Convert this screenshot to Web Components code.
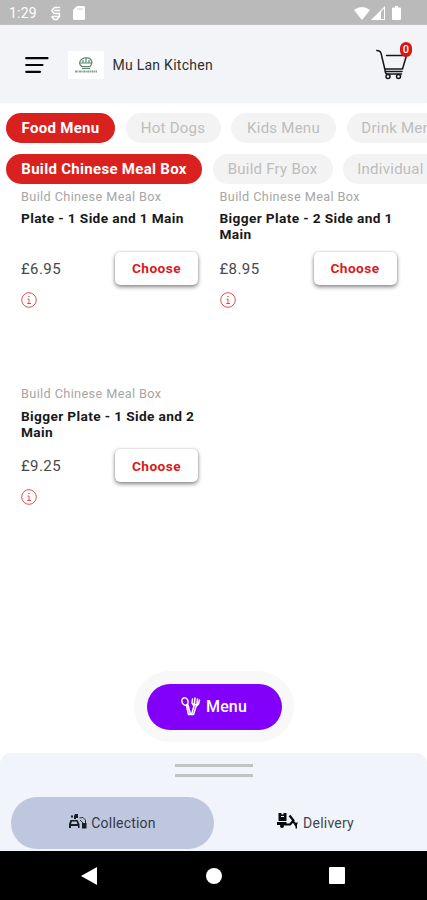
<!DOCTYPE html>
<html lang="en">
<head>
<meta charset="utf-8">
<title>Mu Lan Kitchen</title>
<style>
html,body{margin:0;padding:0;height:900px;overflow:hidden;background:#fff}
body{font-family:Roboto,"Liberation Sans",sans-serif;color:#333}
</style>
</head>
<body>
<order-app></order-app>
<script>
function define(name, markup) {
  const template = document.createElement('template');
  template.innerHTML = markup;
  customElements.define(name, class extends HTMLElement {
    constructor() {
      super();
      this.attachShadow({mode: 'open'}).appendChild(template.content.cloneNode(true));
    }
  });
}

define('status-bar', `
<style>
:host{display:flex;align-items:center;height:25px;background:#bababa;color:#fff;font-size:14px;padding:1px 26px 0 9px;box-sizing:border-box}
span{width:41px;letter-spacing:.2px}
svg{display:block}
.gap{flex:1}
</style>
<span>1:29</span>
<svg width="12" height="15" viewBox="0 0 12 15" fill="none" stroke="#fff" stroke-width="1.400"><path d="M10 1.500H4.500L1.700 4.500 4 7.500H9.500V10.500L7 13.500H4L1.500 10.500M4 4.500H10M1.800 10.500H9"/></svg>
<svg style="margin-left:11px" width="12" height="14" viewBox="0 0 12 14"><path fill="#fff" d="M4 0h6.500Q12 0 12 1.500v11q0 1.500-1.500 1.500h-9Q0 14 0 12.500V4z"/><path stroke="#bababa" stroke-width=".7" d="M5 2v2M7 2v2M9 2v2"/></svg>
<div class="gap"></div>
<svg width="16" height="13" viewBox="0 0 16 13"><path fill="#fff" d="M0 3Q8-3 16 3L8 13z"/></svg>
<svg style="margin-left:1px" width="14" height="14" viewBox="0 0 14 14"><path fill="#fff" d="M0 14 14 0v14z"/><path fill="#bababa" d="M10 5.500 13 2.500V13H10z"/></svg>
<svg style="margin-left:7px" width="9" height="14" viewBox="0 0 9 14"><path fill="#fff" d="M3 0h3v1.500h2Q9 1.500 9 2.500V13q0 1-1 1H1q-1 0-1-1V2.500q0-1 1-1h2z"/></svg>`);

define('cart-button', `
<style>
:host{display:block;position:relative;width:40px;height:40px}
svg{display:block}
b{position:absolute;left:24px;top:-3px;width:12px;height:15px;border-radius:6px;background:#dc1313;color:#fff;font-size:11px;line-height:15px;text-align:center;font-weight:500}
</style>
<svg width="40" height="40" viewBox="0 0 40 40" fill="none" stroke="#16161a" stroke-width="1.500" stroke-linecap="round" stroke-linejoin="round"><path d="M.800 5.500Q4 5.500 5 8L9 25Q9 29 11.500 29H25.500M10.500 10.500H30.500L26.500 24H9M9.500 26.500H26" /><circle cx="12" cy="31.500" r="2"/><circle cx="22.500" cy="31.500" r="2"/></svg>
<b><slot></slot></b>`);

define('app-header', `
<style>
:host{display:flex;align-items:center;height:78px;box-sizing:border-box;background:#f2f4f7;padding:0 14px 0 25px;box-shadow:0 1px 2px #f8f9fb}
.logo{width:36px;height:28px;background:#fff;margin:2px 8.500px 0 19px;display:grid;place-items:center}
.name{font-size:14px;letter-spacing:.26px;color:#303030;flex:1;padding-top:2px}
cart-button{margin-top:1px;margin-right:-3px}
svg{display:block}
</style>
<svg style="margin-top:2px" width="24" height="18" viewBox="0 0 24 18" stroke="#050505" stroke-width="2.200" stroke-linecap="round"><path d="M1.200 2.200H22.500M1.200 9H17.500M1.200 15.800H15"/></svg>
<div class="logo"><svg width="24" height="18" viewBox="0 0 24 18" fill="none" stroke="#5e8673"><path stroke-width="1.200" d="M7.500 10.500C3 6 8 1.500 12 2c5-.5 8 4 4 8.500H7.500ZM6 7h12M12 2v5M9 4v3M15 4v3M8 12.300h8"/><path stroke="#7c9f90" stroke-width="2" stroke-dasharray="2 .5 1 .6" d="M1 15.500H23"/></svg></div>
<div class="name"><slot></slot></div>
<cart-button>0</cart-button>`);

define('menu-chip', `
<style>
:host{display:flex;align-items:center;justify-content:center;flex:none;box-sizing:border-box;height:30px;border-radius:15px;background:#f3f3f3;color:#bdbdbd;font-size:15px;white-space:nowrap;width:var(--w);letter-spacing:.25px}
:host([active]){background:#d9221f;color:#fff;font-weight:700;letter-spacing:.3px}
</style><slot></slot>`);

define('chip-row', `
<style>:host{display:flex;gap:10.500px;padding-left:6px;overflow:hidden;height:30px;margin-bottom:10.500px}</style><slot></slot>`);

define('choose-button', `
<style>:host{display:grid;place-items:center;width:83px;height:33px;border-radius:5px;background:#fff;color:#dc1919;font-size:13.700px;font-weight:700;letter-spacing:.45px;box-shadow:0 2px 4px #0007,0 0 2px #0003}</style><slot>Choose</slot>`);

define('info-icon', `
<style>:host{display:block;height:16px}svg{display:block}</style>
<svg width="16" height="16" viewBox="0 0 16 16" fill="none" stroke="#df4f4f"><circle cx="8" cy="8" r="7.300" stroke-width="1"/><path stroke-width="1" d="M6.500 7H8v4.500M6.200 11.500h3.800M7.300 4.500h1.300"/></svg>`);

define('menu-item', `
<style>
:host{display:block;height:197.500px;padding:0 21px 0 21px;box-sizing:border-box}
.cat{font-size:12.700px;line-height:16px;color:#a6a6a6;letter-spacing:.38px;white-space:nowrap}
.title{font-size:13.700px;line-height:16px;font-weight:700;color:#191919;letter-spacing:.36px;margin-top:5.500px;height:32px;width:182px}
.row{display:flex;align-items:center;justify-content:space-between;height:33px;margin-top:9.500px}
.price{font-size:15px;color:#484848;letter-spacing:.4px;padding-top:1px}
info-icon{margin-top:7px}
</style>
<div class="cat">Build Chinese Meal Box</div>
<div class="title"><slot></slot></div>
<div class="row"><span class="price"><slot name="price"></slot></span><choose-button></choose-button></div>
<info-icon></info-icon>`);

define('menu-grid', `
<style>:host{display:grid;grid-template-columns:198.500px 198.500px;margin-top:6px;padding-top:4.500px}
::slotted(menu-item){width:219px}</style><slot></slot>`);

define('menu-fab', `
<style>
:host{position:absolute;left:134px;top:671px;width:160px;height:71px;border-radius:36px;background:#f8f8f8;display:grid;place-items:center}
div{width:135px;height:46px;border-radius:23px;background:#8200fa;color:#fff;font-size:16px;font-weight:500;display:flex;align-items:center;justify-content:center;gap:5px;letter-spacing:.1px}
svg{margin-left:-1px}
</style>
<div><svg width="21" height="21" viewBox="0 0 21 21" fill="none" stroke="#fff" stroke-width="1.500" stroke-linecap="round" stroke-linejoin="round"><ellipse cx="5" cy="5.500" rx="3" ry="3.700" transform="rotate(-20 5 5.500)"/><path d="M6.500 9.500 8.500 18.500H10.500L8 9M12.500 3 12 7 14 10 11.500 18.500H13.500L16 10.500 18.500 8 19.500 4M15 2 14.500 7M17.500 3 17 7.500M13.500 8Q16 9.500 18 7.500"/></svg><slot></slot></div>`);

define('mode-tab', `
<style>
:host{display:flex;align-items:center;justify-content:center;height:52px;width:203px;border-radius:26px;font-size:14px;color:#44464d;letter-spacing:.22px;gap:4px}
:host([active]){background:#bfc7de;color:#34384a}
</style><slot name="icon"></slot><slot></slot>`);

define('order-sheet', `
<style>
:host{position:absolute;left:0;top:753px;width:427px;height:98px;box-sizing:border-box;background:#f2f4fb;border-radius:11px 11px 0 0}
.handle{width:78px;height:7px;border:solid #c2c3c5;border-width:3px 0;margin:11px auto 20px 175px}
.tabs{display:flex;padding-left:11px}
svg{display:block}
</style>
<div class="handle"></div>
<div class="tabs">
<mode-tab active><svg slot="icon" width="18" height="17" viewBox="0 0 18 17" fill="#1b1d24" style="margin-top:-4px"><path d="M2 2.500h2v2H2zM6 1h3v4H7v1H5V3zM1.500 7h7l2 4v4H9v-2H2v2H0v-4zm1.500 1.500L2 11h6.500l-1-2.500z"/><path fill="none" stroke="#1b1d24" stroke-width=".9" d="M10.500 5q4-2 6 2v3M11 7l3 3"/><path d="M13 10h4.500v5.500H13z"/></svg>Collection</mode-tab>
<mode-tab><svg slot="icon" width="22" height="18" viewBox="0 0 22 18" style="margin-top:-5px"><path fill="#08090c" d="M1.500 1h3v1.500h2V1h3v8h-8zM0 10h9.500v3H0z"/><path fill="#f2f4fb" d="M4 4h3v1H4z"/><circle cx="5" cy="14" r="2" fill="#08090c"/><path fill="none" stroke="#08090c" stroke-width="2.200" stroke-linejoin="round" d="M7 12.500h6l3.500-4-4-5M15 8.500 18 11.500"/><path fill="#08090c" d="M17 12.500q1-2.500 4-2l-1 2v4h-1.500v-2z"/></svg>Delivery</mode-tab>
</div>`);

define('system-nav', `
<style>
:host{position:absolute;left:0;top:851px;width:427px;height:49px;background:#000;display:flex;align-items:center;box-sizing:border-box;padding-left:81px}
svg{display:block}
</style>
<svg width="16" height="18" viewBox="0 0 16 18" fill="#fff"><path d="M0 9 16 0v18z"/></svg>
<svg style="margin-left:109px" width="16" height="16" viewBox="0 0 16 16" fill="#fff"><circle cx="8" cy="8" r="8"/></svg>
<svg style="margin-left:107px" width="16" height="17" viewBox="0 0 16 17" fill="#fff"><rect width="16" height="17" rx="1"/></svg>`);

define('order-app', `
<style>:host{display:block;position:relative;width:427px;height:900px;background:#fff;overflow:hidden}
.chips{padding-top:10px;height:75px;box-sizing:border-box}</style>
<status-bar></status-bar>
<app-header>Mu Lan Kitchen</app-header>
<div class="chips">
<chip-row><menu-chip active style="--w:109px">Food Menu</menu-chip><menu-chip style="--w:95px">Hot Dogs</menu-chip><menu-chip style="--w:105px">Kids Menu</menu-chip><menu-chip style="--w:108px">Drink Menu</menu-chip></chip-row>
<chip-row><menu-chip active style="--w:196px">Build Chinese Meal Box</menu-chip><menu-chip style="--w:120px">Build Fry Box</menu-chip><menu-chip style="--w:138px">Individual Items</menu-chip></chip-row>
</div>
<menu-grid>
<menu-item>Plate - 1 Side and 1 Main<span slot="price">£6.95</span></menu-item>
<menu-item>Bigger Plate - 2 Side and 1 Main<span slot="price">£8.95</span></menu-item>
<menu-item>Bigger Plate - 1 Side and 2 Main<span slot="price">£9.25</span></menu-item>
</menu-grid>
<menu-fab>Menu</menu-fab>
<order-sheet></order-sheet>
<system-nav></system-nav>`);
</script>
</body>
</html>
